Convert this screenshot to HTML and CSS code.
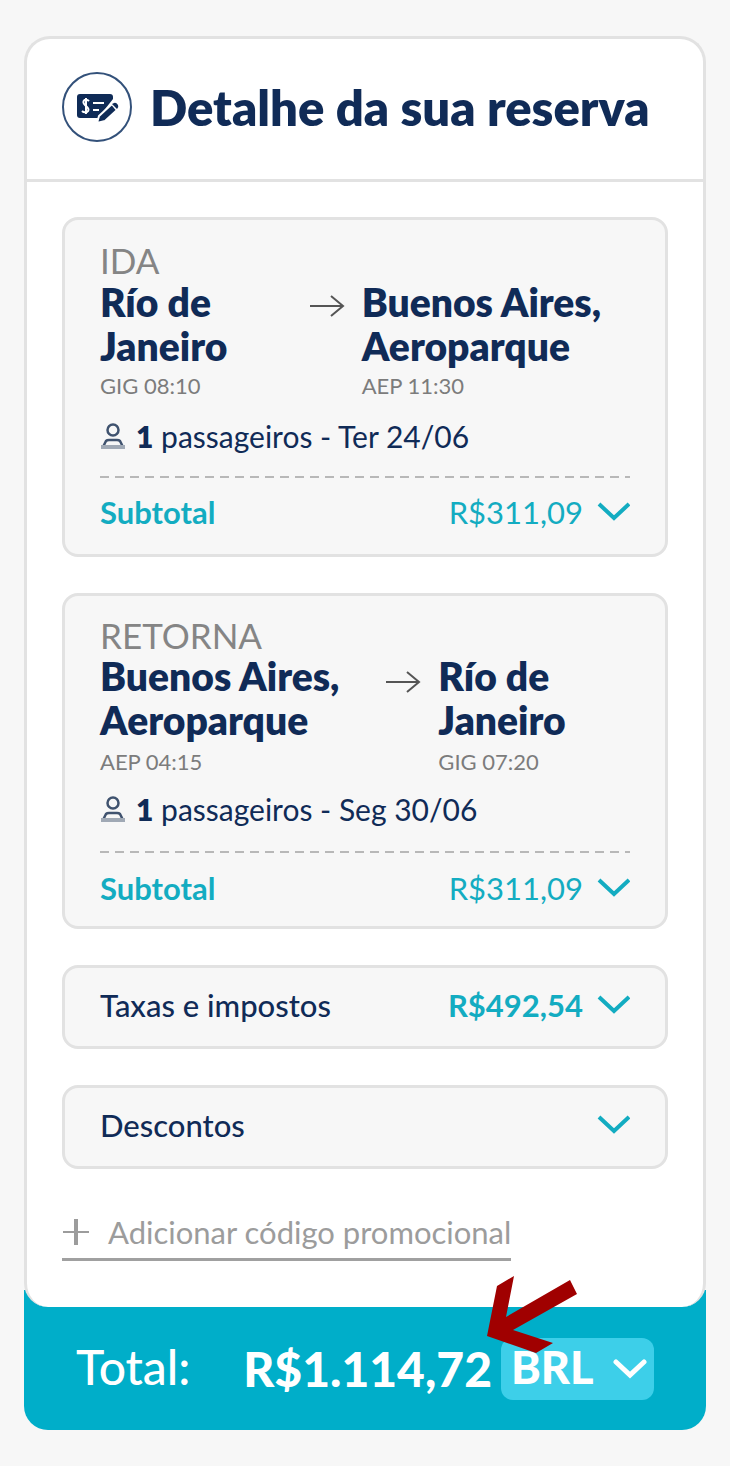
FILE: index.html
```
<!DOCTYPE html>
<html lang="pt-BR">
<head>
<meta charset="utf-8">
<meta name="viewport" content="width=device-width, initial-scale=1">
<title>Detalhe da sua reserva</title>
<link rel="stylesheet" href="styles.css">
</head>
<body>
<svg class="sprite" aria-hidden="true">
  <symbol id="chevron" viewBox="0 0 34 20"><path d="M3 2 L18 16 L33 2" fill="none" stroke="currentColor" stroke-width="4"/></symbol>
  <symbol id="arrow" viewBox="0 0 36 24"><path d="M1 12 H34 M22 2 L34 12 L22 22" fill="none" stroke="currentColor" stroke-width="2"/></symbol>
  <symbol id="person" viewBox="0 0 26 28"><circle cx="13" cy="8" r="5.500" fill="none" stroke="#40536f" stroke-width="2.500"/><path d="M3 25 L6 19 Q7 18 9 18 H17 Q19 18 20 19 L23 25" fill="none" stroke="#40536f" stroke-width="2.500"/><path d="M1 25 H25" stroke="#a0a9b5" stroke-width="4"/></symbol>
</svg>
<main class="booking">
  <section class="card">
    <header class="card-header">
      <svg class="badge" viewBox="0 0 70 70" aria-hidden="true">
        <circle cx="35" cy="35" r="34" fill="#fff" stroke="#33517a" stroke-width="2"/>
        <path d="M18 22 H48 Q51 22 51 25 V27 L36 46 H18 Q15 46 15 43 V25 Q15 22 18 22 Z" fill="#0f2b57"/>
        <path d="M27 29 Q25 27 22.500 28 Q20 30 23 33 L25 35 Q28 38 25 40 Q22 41 20 39 M24 26 V42" fill="none" stroke="#fff" stroke-width="2"/>
        <path d="M31 31 H42 M31 38 H37" stroke="#fff" stroke-width="2"/>
        <path d="M37 44 L50 32 L55 38 L43 49 L35 51 Z" fill="#0f2b57" stroke="#fff" stroke-width="2"/>
        <path d="M50 32 L52 31 Q54 30 56 33 Q57 35 55 37 Z" fill="#0f2b57"/>
      </svg>
      <h1 class="title">Detalhe da sua reserva</h1>
    </header>
    <div class="card-body">
      <article class="panel trip">
        <h2 class="trip-label">IDA</h2>
        <div class="route">
          <div class="place place-short"><p class="city">Río de Janeiro</p><p class="code">GIG 08:10</p></div>
          <svg class="route-arrow" aria-hidden="true"><use href="#arrow"/></svg>
          <div class="place place-long"><p class="city">Buenos Aires, Aeroparque</p><p class="code">AEP 11:30</p></div>
        </div>
        <p class="passengers"><svg class="person" aria-hidden="true"><use href="#person"/></svg><span><b>1</b> passageiros - Ter 24/06</span></p>
        <svg class="divider" aria-hidden="true"><path class="dashes" d="M0 1 H2000"/></svg>
        <button class="row accent" type="button"><strong class="subtotal">Subtotal</strong><span class="amount">R$311,09</span><svg class="chevron" aria-hidden="true"><use href="#chevron"/></svg></button>
      </article>
      <article class="panel trip trip-return">
        <h2 class="trip-label">RETORNA</h2>
        <div class="route">
          <div class="place place-long"><p class="city">Buenos Aires, Aeroparque</p><p class="code">AEP 04:15</p></div>
          <svg class="route-arrow" aria-hidden="true"><use href="#arrow"/></svg>
          <div class="place place-short"><p class="city">Río de Janeiro</p><p class="code">GIG 07:20</p></div>
        </div>
        <p class="passengers"><svg class="person" aria-hidden="true"><use href="#person"/></svg><span><b>1</b> passageiros - Seg 30/06</span></p>
        <svg class="divider" aria-hidden="true"><path class="dashes" d="M0 1 H2000"/></svg>
        <button class="row accent" type="button"><strong class="subtotal">Subtotal</strong><span class="amount">R$311,09</span><svg class="chevron" aria-hidden="true"><use href="#chevron"/></svg></button>
      </article>
      <div class="panel">
        <button class="row" type="button"><span class="row-label">Taxas e impostos</span><strong class="amount">R$492,54</strong><svg class="chevron" aria-hidden="true"><use href="#chevron"/></svg></button>
      </div>
      <div class="panel">
        <button class="row" type="button"><span class="row-label">Descontos</span><svg class="chevron" aria-hidden="true"><use href="#chevron"/></svg></button>
      </div>
      <button class="promo" type="button"><svg class="plus" viewBox="0 0 28 28" aria-hidden="true"><path d="M1 14 H27" stroke="currentColor" stroke-width="2"/><path d="M14 1 V27" stroke="currentColor" stroke-width="4"/></svg>Adicionar código promocional</button>
    </div>
  </section>
  <footer class="total">
    <span class="total-label">Total:</span>
    <strong class="total-value">R$1.114,72</strong>
    <div class="currency">
      <select class="currency-select" aria-label="Moeda"><option>BRL</option></select>
      <svg class="currency-chevron" viewBox="0 0 34 20" aria-hidden="true"><path d="M3 3 L17 16 L31 3" fill="none" stroke="currentColor" stroke-width="5" stroke-linecap="round"/></svg>
    </div>
    <svg class="pointer" viewBox="0 0 90 78" aria-hidden="true"><path d="M0 60 L10 10 L27 0 L19 41 L83 4 L90 18 L26 54 L66 67 L49 77 Z" fill="#a00000"/></svg>
  </footer>
</main>
</body>
</html>
```
FILE: styles.css
```
* { box-sizing: border-box; }
body { margin: 0; padding: 36px 24px; background: #f7f7f7; color: #102b57; font-family: Lato, sans-serif; font-size: 31px; }
h1, h2, p { margin: 0; }
button, select { font: inherit; color: inherit; background: none; border: 0; padding: 0; cursor: pointer; }
svg { display: block; flex: none; }
.sprite { position: absolute; width: 0; height: 0; }

.card { position: relative; z-index: 1; background: #fff; border: 3px solid #e2e2e2; border-bottom: 0; border-radius: 26px 26px 24px 24px; }
.card-header { display: flex; align-items: center; gap: 18px; height: 143px; padding: 0 35px 4px; border-bottom: 3px solid #e2e2e2; }
.badge { width: 70px; height: 70px; }
.title { font-size: 49px; line-height: 60px; font-weight: 800; white-space: nowrap; }
.card-body { display: flex; flex-direction: column; gap: 36px; padding: 35px 35px 46px; }

.panel { background: #f7f7f7; border: 3px solid #e2e2e2; border-radius: 16px; padding: 0 35px; }
.trip { padding-top: 20px; }
.trip-label { font-size: 35px; line-height: 40px; font-weight: 400; color: #858585; }
.route { display: flex; gap: 17px; }
.place { flex-basis: 0; min-width: 0; }
.place-short { flex-grow: 5; }
.place-long { flex-grow: 7; }
.route-arrow { width: 36px; height: 24px; margin-top: 14px; color: #555; }
.city { font-size: 39px; line-height: 44px; font-weight: 800; }
.code { font-size: 22px; line-height: 36px; color: #7c7c7c; }
.passengers { display: flex; align-items: center; gap: 10px; margin: 10px 0 18px; font-size: 30px; line-height: 44px; }
.passengers b { font-weight: 800; }
.person { width: 26px; height: 28px; }
.divider { width: 100%; height: 2px; }
.dashes { fill: none; stroke: #b8b8b8; stroke-width: 2px; stroke-dasharray: 9px 6px; }
.row { display: flex; align-items: center; width: 100%; height: 78px; padding-bottom: 4px; text-align: left; }
.row-label { font-weight: 500; }
.trip .row { height: 76px; padding-bottom: 8px; }
.trip-return .trip-label { line-height: 38px; }
.trip-return .route-arrow { margin-top: 16px; }
.trip-return .code { margin-top: 2px; }
.trip-return .passengers { margin: 7px 0 20px; }
.trip-return .row { height: 73px; padding-bottom: 4px; }
.amount { margin-left: auto; color: #13acc1; }
.accent { color: #13acc1; }
.chevron { width: 34px; height: 20px; margin-left: 13px; color: #13acc1; }
.row-label + .chevron { margin-left: auto; }

.promo { display: flex; align-items: center; gap: 18px; align-self: flex-start; height: 56px; border-bottom: 3px solid #a0a0a0; color: #9c9c9c; white-space: nowrap; }
.plus { width: 28px; height: 28px; }

.total { position: relative; display: flex; align-items: center; height: 140px; margin-top: -17px; padding: 17px 52px 0; background: #00aec9; border-radius: 0 0 24px 24px; color: #fff; font-size: 48px; }
.total-label { margin-right: auto; padding-bottom: 4px; font-weight: 500; }
.total-value { font-weight: 900; }
.currency { position: relative; margin-left: 9px; }
.currency-select { display: block; appearance: none; width: 153px; height: 62px; padding: 0 10px 4px; border-radius: 12px; background: #3dcfe9; font-size: 45px; font-weight: 900; }
.currency-chevron { position: absolute; right: 7px; top: 21px; width: 34px; height: 20px; pointer-events: none; }
.pointer { position: absolute; z-index: 2; right: 129px; top: -14px; width: 90px; height: 78px; }
```
